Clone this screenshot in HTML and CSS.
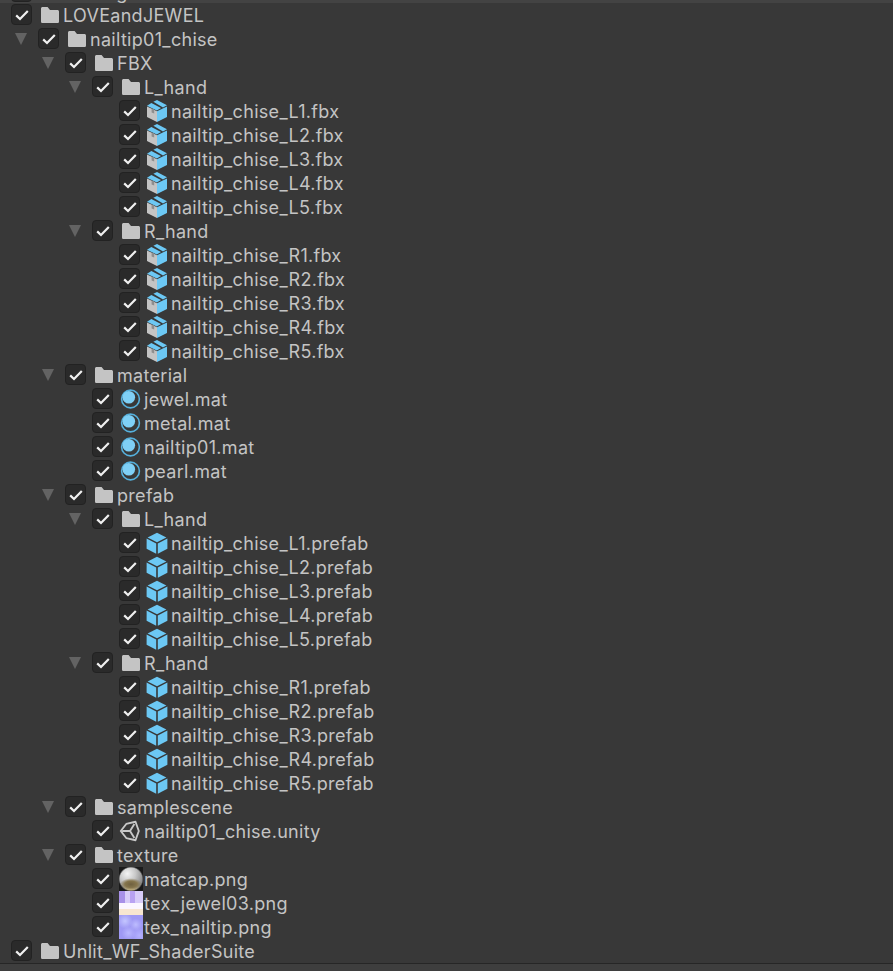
FILE: index.html
```html
<!DOCTYPE html>
<html lang="en">
<head>
<meta charset="utf-8">
<title>Import Unity Package</title>
<link rel="stylesheet" href="styles.css">
</head>
<body>
<svg class="defs" width="0" height="0" aria-hidden="true">
  <defs>
    <symbol id="folder" viewBox="0 0 18 16"><path d="M0 1.6C0 .7.7 0 1.6 0H6.6L9 3H16.4C17.3 3 18 3.7 18 4.6V14.4C18 15.3 17.3 16 16.4 16H1.6C.7 16 0 15.3 0 14.4Z" fill="#c4c4c4"/></symbol>
    <symbol id="box" viewBox="0 0 20 22">
      <path d="M0 6.5 10 11.2V22L0 17Z" fill="#c4c4c4"/>
      <path d="M20 6.5 10 11.2V22L20 17Z" fill="#6cc8f4"/>
      <path d="M0 5.8 4.4 3 14 8 9.8 10.4Z" fill="#6cc8f4"/>
      <path d="M6.4 1.8 10 0 20 5.2 16 7.4Z" fill="#6cc8f4"/>
      <path d="M4.6 8.4V12.4L7.2 13.6V9.6Z" fill="#8e8e8e"/>
    </symbol>
    <symbol id="cube" viewBox="0 0 22 22">
      <path d="M.6 6.6 10.2 11.6V21.8L.6 16.8Z" fill="#6cc8f4"/>
      <path d="M21.4 6.6 11.8 11.6V21.8L21.4 16.8Z" fill="#6cc8f4"/>
      <path d="M11 .8 20.4 5.4 11 10.2 1.6 5.4Z" fill="#6cc8f4"/>
    </symbol>
    <symbol id="mat" viewBox="0 0 22 22">
      <circle cx="11.5" cy="11" r="8.9" fill="none" stroke="#55b0dc" stroke-width="1.6"/>
      <circle cx="9.8" cy="9.2" r="6.3" fill="#7fd0f6"/>
    </symbol>
    <symbol id="unity" viewBox="0 0 20 20">
      <path d="M10 10 3 10M10 10 14 3.6M10 10 14 16.4M1.6 10 6.6 3.6 15 1.6 18 10 15 18.4 6.6 16.4Z" fill="none" stroke="#c8c8c8" stroke-width="1.7" stroke-linejoin="round"/>
    </symbol>
    <symbol id="check" viewBox="0 0 14 12"><path d="M1.2 6.4 5 10 12.8 2" fill="none" stroke="#f0f0f0" stroke-width="2.2"/></symbol>
  </defs>
</svg>

<main class="tree">
  <div class="clip">
    <div class="row l0"><i class="tog"></i><b class="chk"><svg><use href="#check"/></svg></b><svg class="ico folder"><use href="#folder"/></svg><span class="name">Packages</span></div>
  </div>
  <div class="row l0"><i class="tog"></i><b class="chk"><svg><use href="#check"/></svg></b><svg class="ico folder"><use href="#folder"/></svg><span class="name">LOVEandJEWEL</span></div>
  <div class="row l1"><i class="tog open"></i><b class="chk"><svg><use href="#check"/></svg></b><svg class="ico folder"><use href="#folder"/></svg><span class="name">nailtip01_chise</span></div>
  <div class="row l2"><i class="tog open"></i><b class="chk"><svg><use href="#check"/></svg></b><svg class="ico folder"><use href="#folder"/></svg><span class="name">FBX</span></div>
  <div class="row l3"><i class="tog open"></i><b class="chk"><svg><use href="#check"/></svg></b><svg class="ico folder"><use href="#folder"/></svg><span class="name">L_hand</span></div>
  <div class="row l4"><i class="tog"></i><b class="chk"><svg><use href="#check"/></svg></b><svg class="ico big"><use href="#box"/></svg><span class="name">nailtip_chise_L1.fbx</span></div>
  <div class="row l4"><i class="tog"></i><b class="chk"><svg><use href="#check"/></svg></b><svg class="ico big"><use href="#box"/></svg><span class="name">nailtip_chise_L2.fbx</span></div>
  <div class="row l4"><i class="tog"></i><b class="chk"><svg><use href="#check"/></svg></b><svg class="ico big"><use href="#box"/></svg><span class="name">nailtip_chise_L3.fbx</span></div>
  <div class="row l4"><i class="tog"></i><b class="chk"><svg><use href="#check"/></svg></b><svg class="ico big"><use href="#box"/></svg><span class="name">nailtip_chise_L4.fbx</span></div>
  <div class="row l4"><i class="tog"></i><b class="chk"><svg><use href="#check"/></svg></b><svg class="ico big"><use href="#box"/></svg><span class="name">nailtip_chise_L5.fbx</span></div>
  <div class="row l3"><i class="tog open"></i><b class="chk"><svg><use href="#check"/></svg></b><svg class="ico folder"><use href="#folder"/></svg><span class="name">R_hand</span></div>
  <div class="row l4"><i class="tog"></i><b class="chk"><svg><use href="#check"/></svg></b><svg class="ico big"><use href="#box"/></svg><span class="name">nailtip_chise_R1.fbx</span></div>
  <div class="row l4"><i class="tog"></i><b class="chk"><svg><use href="#check"/></svg></b><svg class="ico big"><use href="#box"/></svg><span class="name">nailtip_chise_R2.fbx</span></div>
  <div class="row l4"><i class="tog"></i><b class="chk"><svg><use href="#check"/></svg></b><svg class="ico big"><use href="#box"/></svg><span class="name">nailtip_chise_R3.fbx</span></div>
  <div class="row l4"><i class="tog"></i><b class="chk"><svg><use href="#check"/></svg></b><svg class="ico big"><use href="#box"/></svg><span class="name">nailtip_chise_R4.fbx</span></div>
  <div class="row l4"><i class="tog"></i><b class="chk"><svg><use href="#check"/></svg></b><svg class="ico big"><use href="#box"/></svg><span class="name">nailtip_chise_R5.fbx</span></div>
  <div class="row l2"><i class="tog open"></i><b class="chk"><svg><use href="#check"/></svg></b><svg class="ico folder"><use href="#folder"/></svg><span class="name">material</span></div>
  <div class="row l3"><i class="tog"></i><b class="chk"><svg><use href="#check"/></svg></b><svg class="ico big"><use href="#mat"/></svg><span class="name">jewel.mat</span></div>
  <div class="row l3"><i class="tog"></i><b class="chk"><svg><use href="#check"/></svg></b><svg class="ico big"><use href="#mat"/></svg><span class="name">metal.mat</span></div>
  <div class="row l3"><i class="tog"></i><b class="chk"><svg><use href="#check"/></svg></b><svg class="ico big"><use href="#mat"/></svg><span class="name">nailtip01.mat</span></div>
  <div class="row l3"><i class="tog"></i><b class="chk"><svg><use href="#check"/></svg></b><svg class="ico big"><use href="#mat"/></svg><span class="name">pearl.mat</span></div>
  <div class="row l2"><i class="tog open"></i><b class="chk"><svg><use href="#check"/></svg></b><svg class="ico folder"><use href="#folder"/></svg><span class="name">prefab</span></div>
  <div class="row l3"><i class="tog open"></i><b class="chk"><svg><use href="#check"/></svg></b><svg class="ico folder"><use href="#folder"/></svg><span class="name">L_hand</span></div>
  <div class="row l4"><i class="tog"></i><b class="chk"><svg><use href="#check"/></svg></b><svg class="ico big"><use href="#cube"/></svg><span class="name">nailtip_chise_L1.prefab</span></div>
  <div class="row l4"><i class="tog"></i><b class="chk"><svg><use href="#check"/></svg></b><svg class="ico big"><use href="#cube"/></svg><span class="name">nailtip_chise_L2.prefab</span></div>
  <div class="row l4"><i class="tog"></i><b class="chk"><svg><use href="#check"/></svg></b><svg class="ico big"><use href="#cube"/></svg><span class="name">nailtip_chise_L3.prefab</span></div>
  <div class="row l4"><i class="tog"></i><b class="chk"><svg><use href="#check"/></svg></b><svg class="ico big"><use href="#cube"/></svg><span class="name">nailtip_chise_L4.prefab</span></div>
  <div class="row l4"><i class="tog"></i><b class="chk"><svg><use href="#check"/></svg></b><svg class="ico big"><use href="#cube"/></svg><span class="name">nailtip_chise_L5.prefab</span></div>
  <div class="row l3"><i class="tog open"></i><b class="chk"><svg><use href="#check"/></svg></b><svg class="ico folder"><use href="#folder"/></svg><span class="name">R_hand</span></div>
  <div class="row l4"><i class="tog"></i><b class="chk"><svg><use href="#check"/></svg></b><svg class="ico big"><use href="#cube"/></svg><span class="name">nailtip_chise_R1.prefab</span></div>
  <div class="row l4"><i class="tog"></i><b class="chk"><svg><use href="#check"/></svg></b><svg class="ico big"><use href="#cube"/></svg><span class="name">nailtip_chise_R2.prefab</span></div>
  <div class="row l4"><i class="tog"></i><b class="chk"><svg><use href="#check"/></svg></b><svg class="ico big"><use href="#cube"/></svg><span class="name">nailtip_chise_R3.prefab</span></div>
  <div class="row l4"><i class="tog"></i><b class="chk"><svg><use href="#check"/></svg></b><svg class="ico big"><use href="#cube"/></svg><span class="name">nailtip_chise_R4.prefab</span></div>
  <div class="row l4"><i class="tog"></i><b class="chk"><svg><use href="#check"/></svg></b><svg class="ico big"><use href="#cube"/></svg><span class="name">nailtip_chise_R5.prefab</span></div>
  <div class="row l2"><i class="tog open"></i><b class="chk"><svg><use href="#check"/></svg></b><svg class="ico folder"><use href="#folder"/></svg><span class="name">samplescene</span></div>
  <div class="row l3"><i class="tog"></i><b class="chk"><svg><use href="#check"/></svg></b><svg class="ico big"><use href="#unity"/></svg><span class="name">nailtip01_chise.unity</span></div>
  <div class="row l2"><i class="tog open"></i><b class="chk"><svg><use href="#check"/></svg></b><svg class="ico folder"><use href="#folder"/></svg><span class="name">texture</span></div>
  <div class="row l3"><i class="tog"></i><b class="chk"><svg><use href="#check"/></svg></b><i class="tex matcap"></i><span class="name">matcap.png</span></div>
  <div class="row l3"><i class="tog"></i><b class="chk"><svg><use href="#check"/></svg></b><i class="tex jewel"></i><span class="name">tex_jewel03.png</span></div>
  <div class="row l3"><i class="tog"></i><b class="chk"><svg><use href="#check"/></svg></b><i class="tex nail"></i><span class="name">tex_nailtip.png</span></div>
  <div class="row l0"><i class="tog"></i><b class="chk"><svg><use href="#check"/></svg></b><svg class="ico folder"><use href="#folder"/></svg><span class="name">Unlit_WF_ShaderSuite</span></div>
</main>
<div class="foot"></div>
</body>
</html>
```
FILE: styles.css
```css
html, body { margin: 0; height: 100%; overflow: hidden; }
body {
  width: 893px; height: 971px; background: #383838;
  font-family: Inter, "Noto Sans", sans-serif; color: #c4c4c4;
  display: flex; flex-direction: column;
}
.defs { position: absolute; }
.tree { height: 964px; background: #383838; box-sizing: border-box; overflow: hidden; border-bottom: 1px solid #262626; }
.clip { height: 3px; margin-bottom: 1px; overflow: hidden; display: flex; flex-direction: column; justify-content: flex-end; background: #434343; }
.clip .row { flex: none; margin-bottom: -2px; }
.foot { flex: 1; background: #3e3e3e; }
.row { height: 24px; display: flex; align-items: center; font-size: 18px; line-height: 24px; letter-spacing: .3px; white-space: nowrap; }
.l0 { padding-left: 0; }
.l1 { padding-left: 9px; }
.l2 { padding-left: 36px; }
.l3 { padding-left: 63px; }
.l4 { padding-left: 90px; }
.tog { width: 24px; height: 24px; flex: none; position: relative; margin-right: 5px; }
.l0 .tog { width: 11px; margin-right: 0; visibility: hidden; }
.tog.open::before { content: ""; position: absolute; left: 6px; top: 5px; border-left: 6px solid transparent; border-right: 6px solid transparent; border-top: 12px solid #636363; }
.chk { width: 21px; height: 21px; flex: none; margin-bottom: 3px; box-sizing: border-box; border: 1px solid #222; border-radius: 4px; background: #2a2a2a; display: flex; align-items: center; justify-content: center; }
.chk svg { width: 14px; height: 12px; }
.ico { flex: none; display: block; }
.folder { width: 18px; height: 16px; margin: -2px 4px 0 9px; }
.big { width: 22px; height: 22px; margin: -2px 3px 0 6px; }
.tex { width: 24px; height: 24px; flex: none; display: block; margin: -2px 1px 0 6px; }
.matcap {
  background:
    radial-gradient(circle at 50% 50%, transparent 0 11px, #1a1a1a 12.5px),
    radial-gradient(ellipse 11px 6px at 50% 72%, #6e6040 0, #85754c 55%, transparent 100%),
    radial-gradient(ellipse 12px 5px at 50% 92%, #cdbb86 0, transparent 100%),
    radial-gradient(circle at 35% 28%, #f4f4f4 0, #c8c8c8 35%, #8a8a8a 70%, #b0b0b0 100%);
}
.jewel {
  background:
    linear-gradient(90deg, #a890e8 0 25%, transparent 25% 45%, #b9a2f2 45% 65%, transparent 65%) 0 0 / 100% 12px no-repeat,
    linear-gradient(#d8ccf8 0 50%, #fbf6ff 50% 76%, #f8e6d0 76%);
}
.nail {
  background:
    radial-gradient(circle at 25% 25%, #c4c6ff 0, transparent 30%),
    radial-gradient(circle at 70% 40%, #bdbcff 0, transparent 28%),
    radial-gradient(circle at 40% 75%, #bab8ff 0, transparent 30%),
    radial-gradient(circle at 85% 85%, #b4b1ff 0, transparent 26%),
    #9f99f4;
}
.name { display: block; }
```
